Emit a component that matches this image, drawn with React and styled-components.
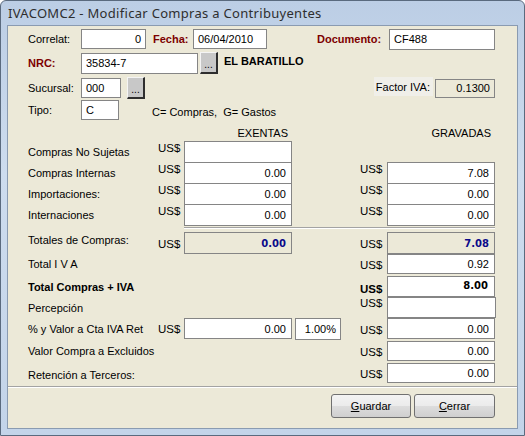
import React from "react";
import styled, { createGlobalStyle } from "styled-components";

const GlobalStyle = createGlobalStyle`
    body {
        margin: 0;
        background: #ffffff;
        font-family: "Liberation Sans", Arial, sans-serif;
    }
`;

const Window = styled.div`
    width: 525px;
    height: 436px;
    box-sizing: border-box;
    display: flex;
    flex-direction: column;
    border: 1px solid #5a6a7e;
    border-radius: 6px 6px 0 0;
    background: linear-gradient(180deg, #bccee5 0%, #cddcee 40%, #c3d4e9 100%);
`;

const TitleBar = styled.div`
    height: 24px;
    display: flex;
    align-items: center;
    padding-left: 7px;
`;

const Title = styled.span`
    font-family: "Noto Sans", "Open Sans", sans-serif;
    font-size: 13px;
    color: #2e2e2e;
    letter-spacing: 0.3px;
`;

const Body = styled.div`
    flex: 1;
    margin: 0 6px 6px 6px;
    border: 1px solid #8a9bb1;
    background: #ece9d8;
    display: flex;
    flex-direction: column;
    font-size: 11px;
    color: #000;
`;

const Header = styled.div`
    padding: 3px 0 0 20px;
    display: flex;
    flex-direction: column;
`;

const FieldRow = styled.div`
    display: flex;
    align-items: center;
    height: ${(p) => p.$h || 20}px;
    margin-top: ${(p) => p.$mt || 0}px;
`;

const Label = styled.span`
    width: ${(p) => (p.$w ? `${p.$w}px` : "auto")};
    margin-left: ${(p) => p.$ml || 0}px;
    font-weight: ${(p) => (p.$strong ? 700 : 400)};
    color: ${(p) => (p.$red ? "#7d0000" : "#000")};
    flex-shrink: 0;
`;

const TextBox = styled.div`
    box-sizing: border-box;
    width: ${(p) => p.$w}px;
    height: ${(p) => p.$h || 20}px;
    margin-left: ${(p) => p.$ml || 0}px;
    border: 1px solid #858585;
    background: ${(p) => (p.$ro ? "#ece9d8" : "#ffffff")};
    display: flex;
    align-items: center;
    justify-content: ${(p) => (p.$right ? "flex-end" : "flex-start")};
    padding: 0 4px;
    flex-shrink: 0;
`;

const DotsButton = styled.div`
    box-sizing: border-box;
    width: 18px;
    height: 22px;
    margin-left: ${(p) => p.$ml || 2}px;
    background: #c8c8c8;
    border-top: 1px solid #f4f4f4;
    border-left: 1px solid #f4f4f4;
    border-right: 2px solid #2e2e2e;
    border-bottom: 2px solid #2e2e2e;
    display: flex;
    align-items: flex-end;
    justify-content: center;
    padding-bottom: 3px;
    font-size: 10px;
    line-height: 8px;
    align-self: flex-start;
`;

const CompanyName = styled.span`
    margin-left: 6px;
    font-weight: 700;
    font-size: 11px;
    align-self: flex-start;
    padding-top: 3px;
`;

const Spacer = styled.div`
    flex: ${(p) => (p.$w ? `0 0 ${p.$w}px` : "1")};
`;

const FactorLabel = styled.span`
    height: 19px;
    display: flex;
    align-items: center;
    padding: 0 3px 0 2px;
    background: #f0efe9;
    margin-right: 2px;
    align-self: flex-start;
`;

const Hint = styled.span`
    margin-left: 33px;
    padding-top: 4px;
`;

const Table = styled.div`
    padding-left: 20px;
    display: flex;
    flex-direction: column;
`;

const AmountRow = styled.div`
    display: grid;
    grid-template-columns: 130px 26px 108px 68px 27px 108px;
    height: ${(p) => p.$h || 21}px;
    margin-top: ${(p) => p.$mt || 0}px;
    align-items: center;
`;

const ColumnHead = styled.span`
    grid-column: ${(p) => p.$col};
    text-align: right;
    padding-right: 4px;
`;

const RowLabel = styled.span`
    grid-column: 1;
    font-weight: ${(p) => (p.$strong ? 700 : 400)};
    align-self: ${(p) => (p.$top ? "start" : "center")};
    padding-top: ${(p) => p.$pt || 0}px;
`;

const Currency = styled.span`
    grid-column: ${(p) => p.$col};
    font-size: 11.5px;
    font-weight: ${(p) => (p.$strong ? 700 : 400)};
    align-self: ${(p) => (p.$top ? "start" : "center")};
    padding-top: ${(p) => p.$pt || 0}px;
`;

const AmountBox = styled.div`
    grid-column: ${(p) => p.$col};
    box-sizing: border-box;
    height: ${(p) => p.$h || 22}px;
    width: ${(p) => p.$w || 108}px;
    align-self: start;
    border: 1px solid #858585;
    background: ${(p) => (p.$ro ? "#ece9d8" : "#ffffff")};
    display: flex;
    align-items: ${(p) => (p.$top ? "flex-start" : "center")};
    justify-content: flex-end;
    padding: ${(p) => (p.$top ? "3px 6px 0 0" : "0 5px 0 0")};
    font-weight: ${(p) => (p.$strong ? 700 : 400)};
    color: ${(p) => (p.$navy ? "#0a0a8a" : "#000")};
    ${(p) => p.$strong && `font-family: "DejaVu Sans", sans-serif; font-size: 10px;`}
`;

const PercentBox = styled.div`
    grid-column: 4;
    box-sizing: border-box;
    width: 46px;
    height: 22px;
    margin-left: 3px;
    align-self: start;
    border: 1px solid #858585;
    background: #fff;
    display: flex;
    align-items: center;
    justify-content: flex-end;
    padding-right: 4px;
`;

const Rule = styled.div`
    grid-column: ${(p) => p.$span || "1 / -1"};
    height: 0;
    border-top: 1px solid #a3a3a3;
    border-bottom: 1px solid #ffffff;
    margin-top: ${(p) => p.$mt || 0}px;
`;

const TableRule = styled.div`
    display: grid;
    grid-template-columns: 130px 26px 108px 68px 27px 108px;
    margin-top: 2px;
`;

const Footer = styled.div`
    display: flex;
    justify-content: flex-end;
    gap: 3px;
    padding: 6px 22px 0 0;
`;

const Button = styled.div`
    box-sizing: border-box;
    width: ${(p) => p.$w || 80}px;
    height: 24px;
    border: 1px solid #707070;
    border-radius: 3px;
    background: linear-gradient(180deg, #f3f3f3 0%, #ebebeb 50%, #dddddd 51%, #cfcfcf 100%);
    display: flex;
    align-items: center;
    justify-content: center;
    font-size: 11px;
`;

const rows = [
    { label: "Compras Internas", ex: "0.00", gr: "7.08" },
    { label: "Importaciones:", ex: "0.00", gr: "0.00" },
    { label: "Internaciones", ex: "0.00", gr: "0.00" },
];

const App = () => {
    return (
        <>
            <GlobalStyle />
            <Window>
                <TitleBar>
                    <Title>IVACOMC2 - Modificar Compras a Contribuyentes</Title>
                </TitleBar>
                <Body>
                    <Header>
                        <FieldRow $h={20}>
                            <Label $w={53}>Correlat:</Label>
                            <TextBox $w={65} $right>0</TextBox>
                            <Label $w={40} $ml={7} $strong $red>Fecha:</Label>
                            <TextBox $w={74}>06/04/2010</TextBox>
                            <Label $w={72} $ml={50} $strong $red>Documento:</Label>
                            <TextBox $w={106} $h={21}>CF488</TextBox>
                        </FieldRow>
                        <FieldRow $h={22} $mt={3}>
                            <Label $w={53} $strong $red>NRC:</Label>
                            <TextBox $w={117} $h={21}>35834-7</TextBox>
                            <DotsButton>...</DotsButton>
                            <CompanyName>EL BARATILLO</CompanyName>
                        </FieldRow>
                        <FieldRow $h={22} $mt={3}>
                            <Label $w={53}>Sucursal:</Label>
                            <TextBox $w={40}>000</TextBox>
                            <DotsButton $ml={6}>...</DotsButton>
                            <Spacer />
                            <FactorLabel>Factor IVA:</FactorLabel>
                            <TextBox $w={60} $h={19} $ro $right>0.1300</TextBox>
                            <Spacer $w={22} />
                        </FieldRow>
                        <FieldRow $h={20} $mt={1}>
                            <Label $w={53}>Tipo:</Label>
                            <TextBox $w={38}>C</TextBox>
                            <Hint>C= Compras,&nbsp; G= Gastos</Hint>
                        </FieldRow>
                    </Header>

                    <Table>
                        <AmountRow $h={14} $mt={6}>
                            <ColumnHead $col={3}>EXENTAS</ColumnHead>
                            <ColumnHead $col={6}>GRAVADAS</ColumnHead>
                        </AmountRow>
                        <AmountRow $mt={1}>
                            <RowLabel $top $pt={5}>Compras No Sujetas</RowLabel>
                            <Currency $col={2} $top $pt={1}>US$</Currency>
                            <AmountBox $col={3}></AmountBox>
                        </AmountRow>
                        {rows.map((r) => (
                            <AmountRow key={r.label}>
                                <RowLabel $top $pt={5}>{r.label}</RowLabel>
                                <Currency $col={2} $top $pt={1}>US$</Currency>
                                <AmountBox $col={3}>{r.ex}</AmountBox>
                                <Currency $col={5} $top $pt={1}>US$</Currency>
                                <AmountBox $col={6}>{r.gr}</AmountBox>
                            </AmountRow>
                        ))}
                        <TableRule>
                            <Rule $span="3 / -1" />
                        </TableRule>

                        <AmountRow $h={22} $mt={3}>
                            <RowLabel $top $pt={2}>Totales de Compras:</RowLabel>
                            <Currency $col={2} $pt={2}>US$</Currency>
                            <AmountBox $col={3} $ro $strong $navy>0.00</AmountBox>
                            <Currency $col={5} $pt={2}>US$</Currency>
                            <AmountBox $col={6} $ro $strong $navy>7.08</AmountBox>
                        </AmountRow>
                        <AmountRow $h={20}>
                            <RowLabel>Total I V A</RowLabel>
                            <Currency $col={5} $pt={2}>US$</Currency>
                            <AmountBox $col={6} $h={20}>0.92</AmountBox>
                        </AmountRow>
                        <AmountRow $mt={2}>
                            <RowLabel $strong $top $pt={5}>Total Compras + IVA</RowLabel>
                            <Currency $col={5} $strong $pt={4}>US$</Currency>
                            <AmountBox $col={6} $h={21} $strong $top>8.00</AmountBox>
                        </AmountRow>
                        <AmountRow>
                            <RowLabel>Percepción</RowLabel>
                            <Currency $col={5} $top>US$</Currency>
                            <AmountBox $col={6} $h={21} $w={109}></AmountBox>
                        </AmountRow>
                        <AmountRow>
                            <RowLabel>% y Valor a Cta IVA Ret</RowLabel>
                            <Currency $col={2}>US$</Currency>
                            <AmountBox $col={3} $h={21}>0.00</AmountBox>
                            <PercentBox>1.00%</PercentBox>
                            <Currency $col={5} $pt={2}>US$</Currency>
                            <AmountBox $col={6} $h={21}>0.00</AmountBox>
                        </AmountRow>
                        <AmountRow $h={20} $mt={2}>
                            <RowLabel>Valor Compra a Excluidos</RowLabel>
                            <Currency $col={5} $pt={2}>US$</Currency>
                            <AmountBox $col={6} $h={20}>0.00</AmountBox>
                        </AmountRow>
                        <AmountRow $h={20} $mt={2}>
                            <RowLabel $pt={4}>Retención a Terceros:</RowLabel>
                            <Currency $col={5} $pt={2}>US$</Currency>
                            <AmountBox $col={6} $h={20}>0.00</AmountBox>
                        </AmountRow>
                    </Table>

                    <Rule $mt={3} />

                    <Footer>
                        <Button>
                            <span><u>G</u>uardar</span>
                        </Button>
                        <Button $w={81}>
                            <span><u>C</u>errar</span>
                        </Button>
                    </Footer>
                </Body>
            </Window>
        </>
    );
};

export default App;
